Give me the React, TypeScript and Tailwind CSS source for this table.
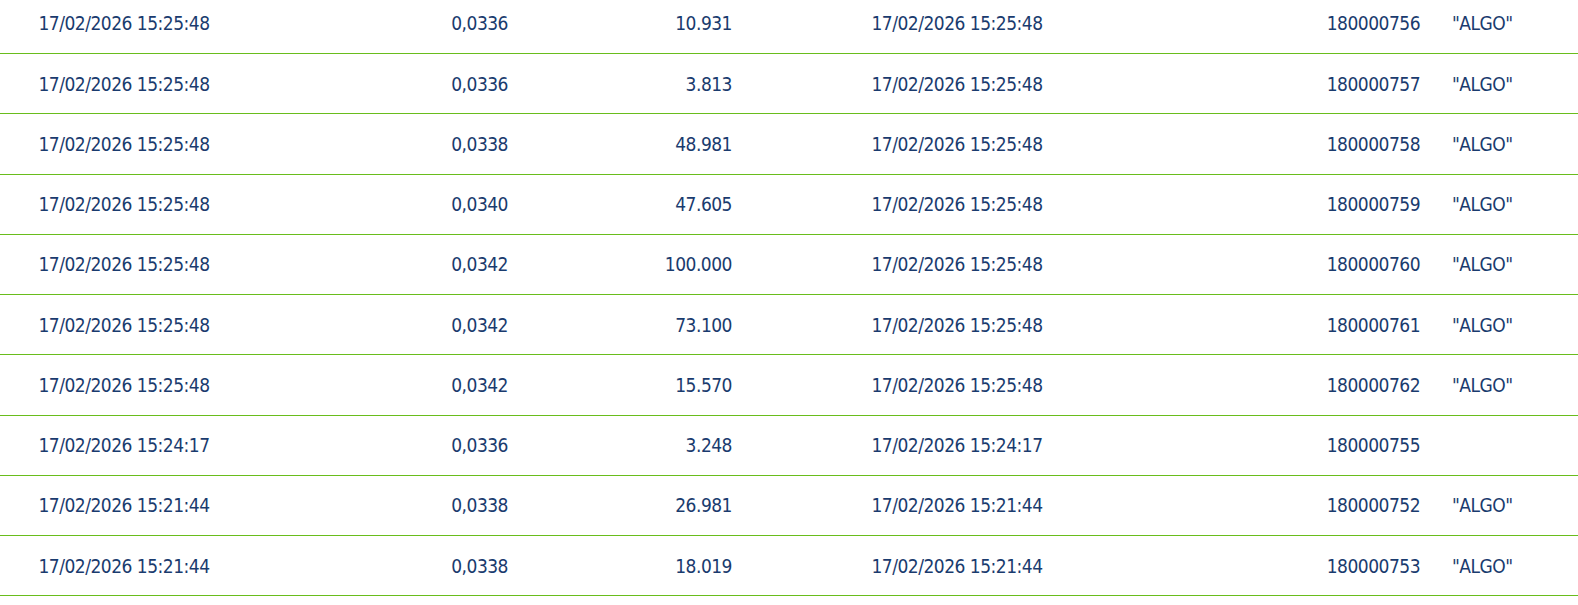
import React from 'react';

interface Trade {
  time: string;
  price: string;
  qty: string;
  execTime: string;
  id: string;
  tag: string;
}

const trades: Trade[] = [
  { time: '17/02/2026 15:25:48', price: '0,0336', qty: '10.931', execTime: '17/02/2026 15:25:48', id: '180000756', tag: '"ALGO"' },
  { time: '17/02/2026 15:25:48', price: '0,0336', qty: '3.813', execTime: '17/02/2026 15:25:48', id: '180000757', tag: '"ALGO"' },
  { time: '17/02/2026 15:25:48', price: '0,0338', qty: '48.981', execTime: '17/02/2026 15:25:48', id: '180000758', tag: '"ALGO"' },
  { time: '17/02/2026 15:25:48', price: '0,0340', qty: '47.605', execTime: '17/02/2026 15:25:48', id: '180000759', tag: '"ALGO"' },
  { time: '17/02/2026 15:25:48', price: '0,0342', qty: '100.000', execTime: '17/02/2026 15:25:48', id: '180000760', tag: '"ALGO"' },
  { time: '17/02/2026 15:25:48', price: '0,0342', qty: '73.100', execTime: '17/02/2026 15:25:48', id: '180000761', tag: '"ALGO"' },
  { time: '17/02/2026 15:25:48', price: '0,0342', qty: '15.570', execTime: '17/02/2026 15:25:48', id: '180000762', tag: '"ALGO"' },
  { time: '17/02/2026 15:24:17', price: '0,0336', qty: '3.248', execTime: '17/02/2026 15:24:17', id: '180000755', tag: '' },
  { time: '17/02/2026 15:21:44', price: '0,0338', qty: '26.981', execTime: '17/02/2026 15:21:44', id: '180000752', tag: '"ALGO"' },
  { time: '17/02/2026 15:21:44', price: '0,0338', qty: '18.019', execTime: '17/02/2026 15:21:44', id: '180000753', tag: '"ALGO"' },
];

const TradeRow: React.FC<{ trade: Trade }> = ({ trade }) => (
  <div className="flex items-center h-[60.25px] border-b border-[#69bd1c] pt-[1px]">
    <div className="w-[248px] shrink-0 text-center">{trade.time}</div>
    <div className="w-[260px] shrink-0 text-right">{trade.price}</div>
    <div className="w-[224px] shrink-0 text-right">{trade.qty}</div>
    <div className="w-[450px] shrink-0 text-center">{trade.execTime}</div>
    <div className="w-[238px] shrink-0 text-right">{trade.id}</div>
    <div className="flex-1 pl-[32px]">{trade.tag}</div>
  </div>
);

export default function App() {
  return (
    <div className="w-[1578px] h-[605px] overflow-hidden bg-white">
      <div
        className="-mt-[6.25px] text-[19px] leading-none tracking-[-0.5px] text-[#1a3b6e]"
        style={{ fontFamily: '"DejaVu Sans Condensed", "Liberation Sans", sans-serif' }}
      >
        {trades.map((t, i) => (
          <TradeRow key={i} trade={t} />
        ))}
      </div>
    </div>
  );
}
